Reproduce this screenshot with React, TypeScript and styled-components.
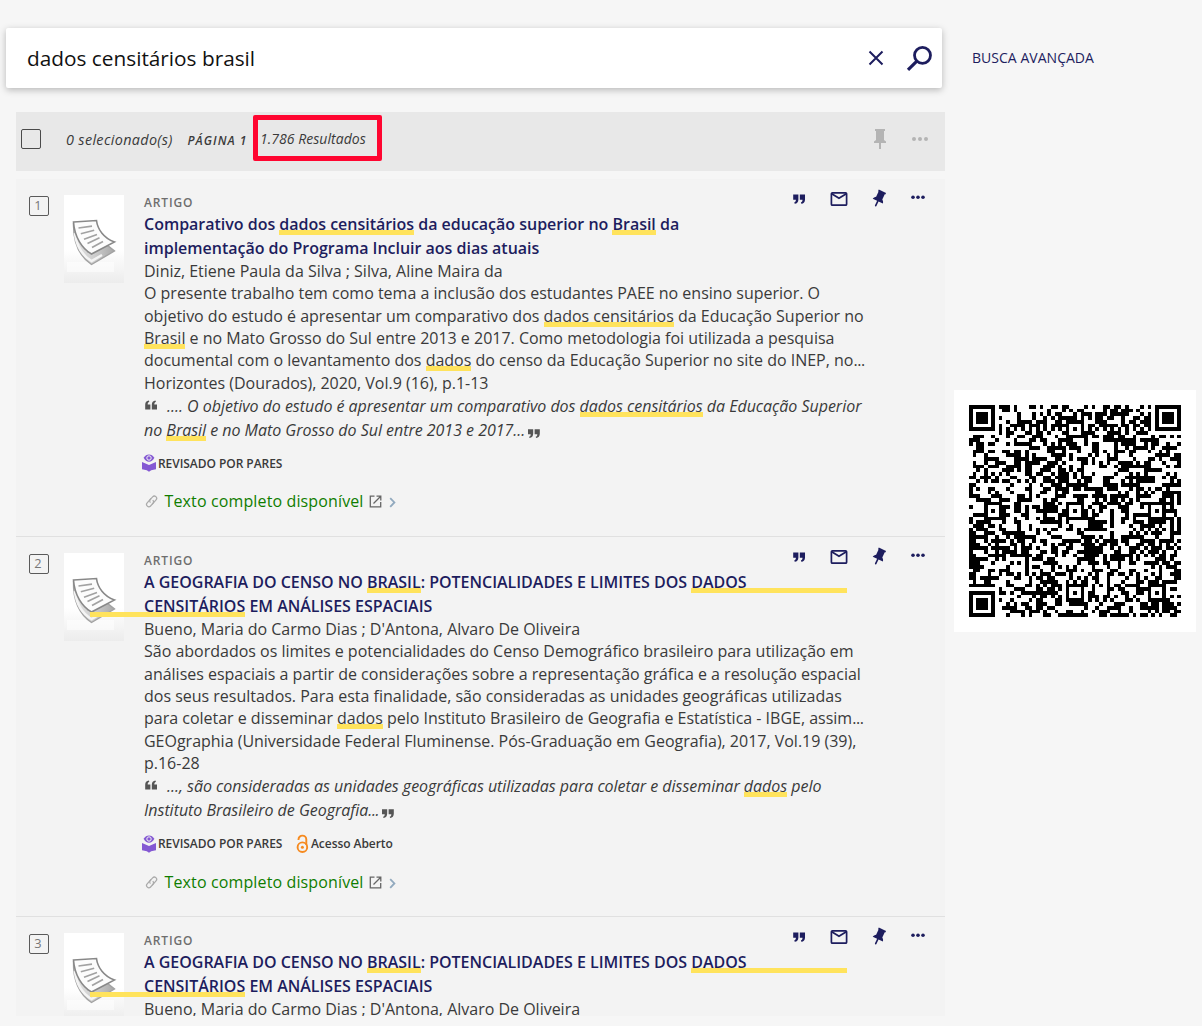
import React from "react";
import styled, { createGlobalStyle } from "styled-components";

const navy = "#1d1d5e";
const ink = "#3a3a3a";

const Global = createGlobalStyle`
  * { box-sizing: border-box; }
  body { margin: 0; background: #f6f6f6; font-family: "Open Sans", "Noto Sans", sans-serif; color: ${ink}; }
  svg { display: block; }
`;

const Page = styled.div`
  display: grid;
  grid-template-columns: 945px 1fr;
  width: 1202px;
  height: 1026px;
  padding-top: 28px;
  overflow: hidden;
`;

const Main = styled.main`
  display: flex;
  flex-direction: column;
`;

const SearchBar = styled.div`
  display: flex;
  align-items: center;
  height: 60px;
  flex: none;
  margin: 0 3px 24px 6px;
  padding-left: 21px;
  background: #fff;
  border-radius: 2px;
  box-shadow: 0 2px 7px rgba(0, 0, 0, 0.26);
`;

const Query = styled.div`
  flex: 1;
  font-size: 20.8px;
  color: #111;
`;

const IconBox = styled.span<{ $w: number; $h: number }>`
  flex: none;
  width: ${(p) => p.$w}px;
  height: ${(p) => p.$h}px;
`;

const Toolbar = styled.div`
  display: flex;
  height: 59px;
  flex: none;
  margin-left: 16px;
  margin-bottom: 8px;
  padding: 0 5px;
  background: #e8e8e8;
  font-style: italic;
`;

const Check = styled.span`
  width: 20px;
  height: 20px;
  margin-top: 17px;
  border: 1px solid #4a4a4a;
  border-radius: 2px;
`;

const Selected = styled.span`
  width: 121.5px;
  padding: 18px 0 0 25px;
  font-size: 14.4px;
  line-height: 20px;
  letter-spacing: 0.34px;
  white-space: nowrap;
`;

const PageLabel = styled.span`
  width: 90.5px;
  padding: 19px 0 0 25px;
  font-size: 12px;
  font-weight: 600;
  line-height: 20px;
  letter-spacing: 1.05px;
  white-space: nowrap;
`;

const ResultCount = styled.span`
  width: 129px;
  height: 46px;
  margin-top: 3px;
  padding: 9px 0 0 2px;
  border: 5px solid #ff0530;
  border-radius: 2px;
  font-size: 14px;
  line-height: 20px;
  letter-spacing: 0.04px;
  white-space: nowrap;
`;

const Tools = styled.span`
  display: flex;
  margin-left: auto;
  padding-top: 7px;
`;

const List = styled.div`
  height: 837px;
  margin-left: 16px;
  overflow: hidden;
  background: #f3f3f3;
`;

const Item = styled.article`
  display: flex;
  padding: 0 6px 20.6px 13px;
  border-bottom: 1px solid #e0e0e0;
`;

const Index = styled.span`
  width: 20px;
  height: 20px;
  margin-top: 17px;
  padding-right: 2px;
  border: 1px solid #5a5a5a;
  border-radius: 2px;
  font-size: 12.8px;
  line-height: 16px;
  text-align: center;
  color: #777;
`;

const Thumb = styled.span`
  width: 60px;
  height: 88px;
  margin: 16px 20px 0 15px;
`;

const Content = styled.div`
  flex: 1;
  min-width: 0;
  letter-spacing: -0.009px;
`;

const Head = styled.div`
  display: flex;
  height: 80.8px;
`;

const Heading = styled.div`
  flex: 1;
  padding-top: 15px;
  white-space: nowrap;
`;

const Kind = styled.div`
  height: 18px;
  font-size: 12px;
  font-weight: 600;
  line-height: 17px;
  letter-spacing: 0.85px;
  color: #6e6e6e;
`;

const Title = styled.h3`
  margin: 0;
  font-size: 16px;
  font-weight: 600;
  line-height: 24px;
  letter-spacing: -0.014px;
  color: ${navy};
`;

const Actions = styled.div`
  display: flex;
  flex: none;
`;

const Line = styled.div`
  font-size: 16px;
  line-height: 22.4px;
  white-space: nowrap;
`;

const Cutoff = styled.span`
  letter-spacing: -0.35px;
`;

const Snippet = styled.div`
  margin-top: -0.4px;
  font-size: 16px;
  font-style: italic;
  line-height: 24px;
  letter-spacing: -0.026px;
  white-space: nowrap;
`;

const Mark = styled.span<{ $before?: number; $after?: number }>`
  margin: 0 ${(p) => -(p.$after ?? 0)}px 0 ${(p) => -(p.$before ?? 0)}px;
  padding: 0 ${(p) => p.$after ?? 0}px 0 ${(p) => p.$before ?? 0}px;
  background: linear-gradient(#ffe35c, #ffe35c) 0 17px / 100% 5px no-repeat;
`;

const QuoteSlot = styled.span<{ $close?: boolean }>`
  display: inline-block;
  width: ${(p) => (p.$close ? 16 : 23)}px;
  height: 12px;
  vertical-align: ${(p) => (p.$close ? "-3px" : "1px")};
`;

const Badges = styled.div`
  display: flex;
  align-items: center;
  height: 20px;
  margin: 11.6px 0 14px -2px;
  font-size: 12px;
  font-weight: 600;
  letter-spacing: -0.05px;
  white-space: nowrap;
`;

const BadgeText = styled.span`
  margin: 0 13.6px 0 2px;
`;

const Availability = styled.div`
  display: flex;
  align-items: center;
  height: 28px;
  font-size: 16px;
  color: #0f7d00;
  white-space: nowrap;
`;

const LinkText = styled.span`
  width: 204.5px;
  letter-spacing: 0.13px;
`;

const Aside = styled.aside`
  display: flex;
  flex-direction: column;
`;

const Advanced = styled.a`
  height: 60px;
  margin: 0 0 302px 27px;
  font-size: 14px;
  line-height: 60px;
  letter-spacing: 0.03px;
  color: ${navy};
`;

const QrCard = styled.div`
  width: 242px;
  height: 242px;
  margin-left: 9px;
  padding: 15px;
  background: #fff;
`;

const quotePath =
  "M0 0H5.4V5C5.4 7.6 4 9.2 1.6 9.6L1.1 8.3C2.3 7.8 2.8 6.8 2.8 5.4H0ZM6.9 0H12.3V5C12.3 7.6 10.9 9.2 8.5 9.6L8 8.3C9.2 7.8 9.7 6.8 9.7 5.4H6.9Z";

function Dots({ r, gap, x, y, color }: { r: number; gap: number; x: number; y: number; color: string }) {
  return (
    <svg width="40" height="40" fill={color}>
      {[0, 1, 2].map((i) => (
        <circle key={i} cx={x + i * gap} cy={y} r={r} />
      ))}
    </svg>
  );
}

function ActionIcons() {
  return (
    <Actions>
      <svg width="40" height="40" fill={navy}>
        <path transform="translate(14.2 15.6) scale(.96)" d={quotePath} />
      </svg>
      <svg width="40" height="40" fill="none" stroke={navy} strokeWidth="1.7">
        <rect x="12.4" y="13.8" width="15.2" height="12.4" rx="1" />
        <path d="M12.7 14.8 20 19.3 27.3 14.8" strokeWidth="1.8" />
      </svg>
      <svg width="40" height="40" fill={navy}>
        <g transform="translate(20.3 18.9) rotate(25)">
          <path d="M-4-7.4H4V-5.6H3.4V0.2C4.6 1 5.4 2.1 5.6 3.5H.8V8.8L0 9.6-.8 8.8V3.5H-5.6C-5.4 2.1-4.6 1-3.4.2V-5.6H-4Z" />
        </g>
      </svg>
      <Dots r={1.8} gap={5} x={14} y={18.2} color={navy} />
    </Actions>
  );
}

function PaperThumb() {
  return (
    <svg width="60" height="88" viewBox="0 0 60 88">
      <defs>
        <linearGradient id="paperFade" x1="0" y1="0" x2="0" y2="1">
          <stop offset="0" stopColor="#fff" />
          <stop offset=".62" stopColor="#fff" />
          <stop offset="1" stopColor="#ececec" />
        </linearGradient>
        <linearGradient id="pageShade" x1="0" y1="0" x2="1" y2="0">
          <stop offset="0" stopColor="#e4e4e4" />
          <stop offset=".5" stopColor="#cecece" />
          <stop offset="1" stopColor="#a8a8a8" />
        </linearGradient>
      </defs>
      <rect width="60" height="88" fill="url(#paperFade)" />
      <path d="M3 67H50V77H3Z" fill="#fff" opacity=".5" />
      <path d="M9.5 28C9 47 15 61 27.5 69.5L50.5 56 43 50 24 57Z" fill="url(#pageShade)" stroke="#a2a2a2" strokeWidth="1.4" />
      <path d="M10.8 38C12.5 51 18 60.5 27.5 66L38 60" fill="none" stroke="#f4f4f4" strokeWidth="2.4" />
      <path
        d="M9.5 27 32.5 25.5C33.5 34 39.5 43 50.5 47L27.5 59C18 53.5 10.5 42 9.5 27Z"
        fill="#fcfcfc"
        stroke="#888"
        strokeWidth="1.6"
      />
      <path d="M14.5 33 28 31.2M16.8 38.8 30.2 35.2M20 44.2 33 39.5M23.5 48.5 35.5 42.8M28 52.4 39 46.4" stroke="#a2a2a2" strokeWidth="1.7" />
    </svg>
  );
}

function OpenQuote() {
  return (
    <QuoteSlot>
      <svg width="14" height="12" fill="#555">
        <path transform="translate(13 10.4) rotate(180) scale(.96 .92)" d={quotePath} />
      </svg>
    </QuoteSlot>
  );
}

function CloseQuote() {
  return (
    <QuoteSlot $close>
      <svg width="16" height="12" fill="#555">
        <path transform="translate(3 2.2) scale(.96 .92)" d={quotePath} />
      </svg>
    </QuoteSlot>
  );
}

function PeerBadge() {
  return (
    <>
      <svg width="14" height="20" fill="#8458d3">
        <path d="M0 8.9 7 11.9 14 8.9V16.2L9.2 17.3 7 18.8 4.8 17.3 0 16.2Z" />
        <path d="M1.6 4.8C3 2.6 4.8 1.4 7 1.4S11 2.6 12.4 4.8C11 7.5 9 8.8 7 8.8S3 7.5 1.6 4.8Z" />
        <circle cx="7" cy="5" r="2.2" fill="none" stroke="#f3f3f3" strokeWidth="1" />
      </svg>
      <BadgeText>REVISADO POR PARES</BadgeText>
    </>
  );
}

function OpenAccess() {
  return (
    <>
      <svg width="13" height="20" fill="none" stroke="#f68a1f" strokeWidth="1.9">
        <circle cx="6.4" cy="13.2" r="4.8" />
        <path d="M2.5 6V5.5a3.9 3.9 0 0 1 7.8 0V11" />
        <circle cx="6.4" cy="13.2" r="1.5" fill="#f68a1f" stroke="none" />
      </svg>
      <BadgeText>Acesso Aberto</BadgeText>
    </>
  );
}

function FullText() {
  return (
    <Availability>
      <svg width="20.5" height="20" fill="none" stroke="#aaa" strokeWidth="1.2">
        <g transform="translate(7.6 10.4) rotate(-48)">
          <path d="M1.8-2.3H-4.1a2.3 2.3 0 0 0 0 4.6H-.6A2.3 2.3 0 0 0 1.7 0" />
          <path d="M-1.8 2.3H4.1a2.3 2.3 0 0 0 0-4.6H.6A2.3 2.3 0 0 0-1.7 0" />
        </g>
      </svg>
      <LinkText>Texto completo disponível</LinkText>
      <svg width="28" height="20" fill="none">
        <path d="M5.5 5.2H1.3V15.8H11.7V11" stroke="#666" strokeWidth="1.3" />
        <path d="M7.5 5.2H11.8V9.5M11.5 5.5 4.5 12.5" stroke="#666" strokeWidth="1.3" />
        <path d="M21.2 7.2 25.4 11.4 21.2 15.8" stroke="#91a9be" strokeWidth="1.8" />
      </svg>
    </Availability>
  );
}

const QR_SIZE = 57;

function nested(x: number, y: number, cx: number, cy: number, outer: number) {
  const d = Math.max(Math.abs(x - cx), Math.abs(y - cy));
  if (d > outer) return null;
  return outer === 2 ? d !== 1 : d !== 2 && d !== 4;
}

function buildCode(): string {
  let seed = 1786;
  const align = [6, 28, 50];
  let path = "";
  for (let y = 0; y < QR_SIZE; y++) {
    for (let x = 0; x < QR_SIZE; x++) {
      seed = (Math.imul(seed, 1664525) + 1013904223) >>> 0;
      let dark = seed / 4294967296 < 0.51;
      if (x === 6 || y === 6) dark = (x + y) % 2 === 0;
      for (const cy of align)
        for (const cx of align) {
          const corner = (cx === 6 && cy !== 28) || (cy === 6 && cx === 50);
          const cell = corner ? null : nested(x, y, cx, cy, 2);
          if (cell !== null) dark = cell;
        }
      for (const [cx, cy] of [[3, 3], [53, 3], [3, 53]]) {
        const cell = nested(x, y, cx, cy, 4);
        if (cell !== null) dark = cell;
      }
      if (dark) path += `M${x} ${y}h1v1h-1z`;
    }
  }
  return path;
}

const codePath = buildCode();

function GeoTitle() {
  return (
    <>
      A GEOGRAFIA DO CENSO NO <Mark>BRASIL</Mark>: POTENCIALIDADES E LIMITES DOS <Mark $after={100}>DADOS</Mark>
      <br />
      <Mark $before={54}>CENSITÁRIOS</Mark> EM ANÁLISES ESPACIAIS
    </>
  );
}

function Result({ n, title, children }: { n: number; title: React.ReactNode; children: React.ReactNode }) {
  return (
    <Item>
      <Index>{n}</Index>
      <Thumb>
        <PaperThumb />
      </Thumb>
      <Content>
        <Head>
          <Heading>
            <Kind>ARTIGO</Kind>
            <Title>{title}</Title>
          </Heading>
          <ActionIcons />
        </Head>
        {children}
      </Content>
    </Item>
  );
}

function GeoAuthors() {
  return <Line>Bueno, Maria do Carmo Dias ; D'Antona, Alvaro De Oliveira</Line>;
}

export default function App() {
  return (
    <Page>
      <Global />
      <Main>
        <SearchBar>
          <Query>dados censitários brasil</Query>
          <IconBox $w={82} $h={60}>
            <svg width="82" height="60" fill="none" stroke={navy}>
              <path d="M9.5 23.5 22.5 36.5M22.5 23.5 9.5 36.5" strokeWidth="2" />
              <circle cx="62.5" cy="27.3" r="8" strokeWidth="2.8" />
              <path d="M56.6 33.4 48 41.8" strokeWidth="3.2" />
            </svg>
          </IconBox>
        </SearchBar>
        <Toolbar>
          <Check />
          <Selected>0 selecionado(s)</Selected>
          <PageLabel>PÁGINA 1</PageLabel>
          <ResultCount>1.786 Resultados</ResultCount>
          <Tools>
            <svg width="40" height="40" fill="#b4b4b4">
              <path d="M15 10H25V12H24V21L26 22.5V24H21V30H19V24H14V22.5L16 21V12H15Z" />
            </svg>
            <Dots r={2} gap={6} x={14} y={20} color="#b4b4b4" />
          </Tools>
        </Toolbar>
        <List>
          <Result
            n={1}
            title={
              <>
                Comparativo dos <Mark>dados censitários</Mark> da educação superior no <Mark>Brasil</Mark> da
                <br />
                implementação do Programa Incluir aos dias atuais
              </>
            }
          >
            <Line>Diniz, Etiene Paula da Silva ; Silva, Aline Maira da</Line>
            <Line>O presente trabalho tem como tema a inclusão dos estudantes PAEE no ensino superior. O</Line>
            <Line>
              objetivo do estudo é apresentar um comparativo dos <Mark>dados censitários</Mark> da Educação Superior no
            </Line>
            <Line>
              <Mark>Brasil</Mark> e no Mato Grosso do Sul entre 2013 e 2017. Como metodologia foi utilizada a pesquisa
            </Line>
            <Line>
              documental com o levantamento dos <Mark>dados</Mark> do censo da Educação Superior no site do INEP, no
              <Cutoff>...</Cutoff>
            </Line>
            <Line>Horizontes (Dourados), 2020, Vol.9 (16), p.1-13</Line>
            <Snippet>
              <OpenQuote />
              .... O objetivo do estudo é apresentar um comparativo dos <Mark>dados censitários</Mark> da Educação
              Superior
              <br />
              no <Mark>Brasil</Mark> e no Mato Grosso do Sul entre 2013 e 2017...
              <CloseQuote />
            </Snippet>
            <Badges>
              <PeerBadge />
            </Badges>
            <FullText />
          </Result>
          <Result n={2} title={<GeoTitle />}>
            <GeoAuthors />
            <Line>São abordados os limites e potencialidades do Censo Demográfico brasileiro para utilização em</Line>
            <Line>análises espaciais a partir de considerações sobre a representação gráfica e a resolução espacial</Line>
            <Line>dos seus resultados. Para esta finalidade, são consideradas as unidades geográficas utilizadas</Line>
            <Line>
              para coletar e disseminar <Mark>dados</Mark> pelo Instituto Brasileiro de Geografia e Estatística - IBGE,
              assim<Cutoff>...</Cutoff>
            </Line>
            <Line>GEOgraphia (Universidade Federal Fluminense. Pós-Graduação em Geografia), 2017, Vol.19 (39),</Line>
            <Line>p.16-28</Line>
            <Snippet>
              <OpenQuote />
              ..., são consideradas as unidades geográficas utilizadas para coletar e disseminar <Mark>dados</Mark> pelo
              <br />
              Instituto Brasileiro de Geografia<Cutoff>...</Cutoff>
              <CloseQuote />
            </Snippet>
            <Badges>
              <PeerBadge />
              <OpenAccess />
            </Badges>
            <FullText />
          </Result>
          <Result n={3} title={<GeoTitle />}>
            <GeoAuthors />
          </Result>
        </List>
      </Main>
      <Aside>
        <Advanced>BUSCA AVANÇADA</Advanced>
        <QrCard>
          <svg width="212" height="212" viewBox={`0 0 ${QR_SIZE} ${QR_SIZE}`} shapeRendering="crispEdges">
            <path d={codePath} />
          </svg>
        </QrCard>
      </Aside>
    </Page>
  );
}
